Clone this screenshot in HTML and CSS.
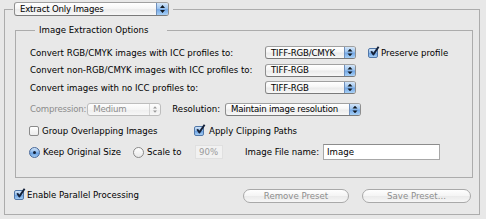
FILE: index.html
```html
<!DOCTYPE html>
<html>
<head>
<meta charset="utf-8">
<link rel="stylesheet" href="styles.css">
</head>
<body>
<div class="window">
  <fieldset class="outer">
    <legend class="outer-legend">
      <div class="popup popup-main">
        <span class="popup-label">Extract Only Images</span>
        <span class="popup-arrows"><svg width="11" height="12" viewBox="0 0 11 12"><path d="M3 5 L8 5 L5.5 2 Z M3 7 L8 7 L5.5 10 Z" fill="#101820"/></svg></span>
      </div>
    </legend>

    <fieldset class="inner">
      <legend class="inner-legend">Image Extraction Options</legend>

      <div class="convert-grid">
        <span class="label">Convert RGB/CMYK images with ICC profiles to:</span>
        <div class="popup popup-tiff">
          <span class="popup-label">TIFF-RGB/CMYK</span>
          <span class="popup-arrows"><svg width="10" height="11" viewBox="0 0 10 11"><path d="M2.5 4.6 L7.5 4.6 L5 1.8 Z M2.5 6.4 L7.5 6.4 L5 9.2 Z" fill="#101820"/></svg></span>
        </div>
        <div class="check preserve">
          <span class="cb checked"><svg class="tick" width="11" height="11" viewBox="0 0 11 11"><path d="M2.2 5.2 L4.4 8.4 L9.6 0.8" fill="none" stroke="#14213a" stroke-width="1.9" stroke-linejoin="round"/></svg></span>
          <span>Preserve profile</span>
        </div>

        <span class="label">Convert non-RGB/CMYK images with ICC profiles to:</span>
        <div class="popup popup-tiff">
          <span class="popup-label">TIFF-RGB</span>
          <span class="popup-arrows"><svg width="10" height="11" viewBox="0 0 10 11"><path d="M2.5 4.6 L7.5 4.6 L5 1.8 Z M2.5 6.4 L7.5 6.4 L5 9.2 Z" fill="#101820"/></svg></span>
        </div>
        <span></span>

        <span class="label">Convert images with no ICC profiles to:</span>
        <div class="popup popup-tiff">
          <span class="popup-label">TIFF-RGB</span>
          <span class="popup-arrows"><svg width="10" height="11" viewBox="0 0 10 11"><path d="M2.5 4.6 L7.5 4.6 L5 1.8 Z M2.5 6.4 L7.5 6.4 L5 9.2 Z" fill="#101820"/></svg></span>
        </div>
        <span></span>
      </div>

      <div class="comp-row">
        <span class="comp-label disabled-text">Compression:</span>
        <div class="popup popup-medium disabled">
          <span class="popup-label">Medium</span>
          <span class="popup-arrows"><svg width="10" height="11" viewBox="0 0 10 11"><path d="M3 4.6 L7 4.6 L5 2.2 Z M3 6.4 L7 6.4 L5 8.8 Z" fill="#9a9a9a"/></svg></span>
        </div>
        <span class="res-label">Resolution:</span>
        <div class="popup popup-res">
          <span class="popup-label">Maintain image resolution</span>
          <span class="popup-arrows"><svg width="10" height="11" viewBox="0 0 10 11"><path d="M2.5 4.6 L7.5 4.6 L5 1.8 Z M2.5 6.4 L7.5 6.4 L5 9.2 Z" fill="#101820"/></svg></span>
        </div>
      </div>

      <div class="options-grid">
        <div class="check group-check">
          <span class="cb"></span>
          <span>Group Overlapping Images</span>
        </div>
        <div class="check clip-check">
          <span class="cb checked"><svg class="tick" width="11" height="11" viewBox="0 0 11 11"><path d="M2.2 5.2 L4.4 8.4 L9.6 0.8" fill="none" stroke="#14213a" stroke-width="1.9" stroke-linejoin="round"/></svg></span>
          <span>Apply Clipping Paths</span>
        </div>

        <div class="check">
          <span class="rb selected"><span class="dot"></span></span>
          <span>Keep Original Size</span>
        </div>
        <div class="check">
          <span class="rb"></span>
          <span>Scale to</span>
        </div>
        <div class="size-right">
          <span class="field field-scale">90%</span>
          <span class="file-label">Image File name:</span>
          <span class="field field-name">Image</span>
        </div>
      </div>
    </fieldset>

    <div class="footer">
      <div class="check">
        <span class="cb checked"><svg class="tick" width="11" height="11" viewBox="0 0 11 11"><path d="M2.2 5.2 L4.4 8.4 L9.6 0.8" fill="none" stroke="#14213a" stroke-width="1.9" stroke-linejoin="round"/></svg></span>
        <span>Enable Parallel Processing</span>
      </div>
      <div class="buttons">
        <span class="button btn-remove">Remove Preset</span>
        <span class="button btn-save">Save Preset...</span>
      </div>
    </div>
  </fieldset>
</div>
</body>
</html>
```

FILE: styles.css
```css
* {
  box-sizing: border-box;
}

html, body {
  margin: 0;
  padding: 0;
  background: #e8e8e8;
}

body {
  font-family: "DejaVu Sans", "Noto Sans", sans-serif;
  font-size: 8.6px;
  color: #000;
  width: 486px;
  height: 219px;
  overflow: hidden;
}

.window {
  padding: 2px 6px 0 4px;
}

fieldset {
  margin: 0;
  padding: 0;
  border: 1px solid #acacac;
  min-width: 0;
}

.outer {
  width: 476px;
  padding: 0 0 11px 0;
}

.outer-legend {
  margin-left: 8px;
  padding: 0 4px 0 1px;
}

/* popup buttons */
.popup {
  display: flex;
  align-items: stretch;
  flex: none;
  border: 1px solid #8e8e8e;
  border-top-color: #a0a0a0;
  border-bottom-color: #7a7a7a;
  border-radius: 3px;
  background: linear-gradient(#ffffff, #f6f6f6 45%, #ebebeb 55%, #f8f8f8);
  overflow: hidden;
  white-space: nowrap;
}

.popup-label {
  flex: 1;
  display: flex;
  align-items: center;
  padding-left: 5px;
  letter-spacing: -0.2px;
  overflow: hidden;
}

.popup-arrows {
  display: flex;
  align-items: center;
  justify-content: center;
  flex: none;
  width: 11px;
  border-left: 1px solid #6f90bd;
  background: linear-gradient(#d3e5f8, #9ec5ef 45%, #74a8e6 55%, #a7d0f6);
}

.popup-main {
  width: 155px;
  height: 14px;
}

.popup-main .popup-arrows {
  width: 12px;
}

.popup-tiff {
  width: 91px;
  height: 13px;
}

.popup-medium {
  width: 74px;
  height: 13px;
}

.popup-res {
  width: 136px;
  height: 13px;
}

.popup.disabled {
  border-color: #bdbdbd;
  color: #8c8c8c;
  background: linear-gradient(#fdfdfd, #f5f5f5 50%, #eeeeee 51%, #f7f7f7);
}

.popup.disabled .popup-arrows {
  background: transparent;
  border-left: 1px solid #d4d4d4;
}

/* inner group */
.inner {
  margin: 8px 6px 0 10px;
  padding: 8px 0 16px 14px;
}

.inner-legend {
  margin-left: 5px;
  padding: 0 19px 0 4px;
  line-height: 12px;
}

.convert-grid {
  display: grid;
  grid-template-columns: 235px 91px auto;
  grid-template-rows: 17px 18px 17px;
  align-items: center;
  white-space: nowrap;
}

.preserve {
  margin-left: 12px;
}

.comp-row {
  display: flex;
  align-items: center;
  height: 18px;
  margin-top: 4px;
  white-space: nowrap;
}

.comp-label {
  letter-spacing: -0.2px;
  margin-right: 1px;
}

.disabled-text {
  color: #8c8c8c;
}

.res-label {
  margin-left: 11px;
  margin-right: 5px;
}

.options-grid {
  display: grid;
  grid-template-columns: 104px 61px auto;
  grid-template-rows: 18px 18px;
  row-gap: 3px;
  margin-top: 4px;
  margin-left: -1px;
  align-items: center;
  white-space: nowrap;
}

.group-check {
  grid-column: 1 / 3;
}

.check {
  display: flex;
  align-items: center;
  gap: 3px;
  white-space: nowrap;
}

.clip-check {
  gap: 5px;
}

/* checkbox */
.cb {
  position: relative;
  flex: none;
  width: 10px;
  height: 10px;
  border: 1px solid #8a8a8a;
  border-radius: 2px;
  background: linear-gradient(#ffffff, #ececec);
}

.cb.checked {
  border-color: #5177a8;
  background: linear-gradient(#d2e4f7, #97c0ec 45%, #6ea3e3 55%, #a5cdf4);
}

.tick {
  position: absolute;
  left: 0;
  top: -3px;
}

/* radio */
.rb {
  flex: none;
  display: flex;
  align-items: center;
  justify-content: center;
  width: 11px;
  height: 11px;
  border: 1px solid #8a8a8a;
  border-radius: 50%;
  background: linear-gradient(#ffffff, #e8e8e8);
}

.rb.selected {
  border-color: #48699a;
  background: linear-gradient(#cfe2f7, #8fbbec 45%, #659ddf 55%, #a2cbf3);
}

.dot {
  width: 3px;
  height: 3px;
  border-radius: 50%;
  background: #122036;
}

/* fields */
.size-right {
  display: flex;
  align-items: center;
}

.field {
  display: flex;
  align-items: center;
  flex: none;
  padding-left: 3px;
}

.field-scale {
  width: 28px;
  height: 14px;
  margin-left: 1px;
  color: #9a9a9a;
  background: #f1f1f1;
  border: 1px solid #e0e0e0;
}

.file-label {
  margin-left: 22px;
  margin-right: 4px;
}

.field-name {
  width: 117px;
  height: 16px;
  background: #ffffff;
  border: 1px solid #a8a8a8;
  border-top-color: #8c8c8c;
}

/* footer */
.footer {
  display: flex;
  align-items: center;
  height: 16px;
  margin-top: 9px;
  padding: 0 8px 0 9px;
}

.buttons {
  display: flex;
  margin-left: auto;
  align-self: flex-end;
}

.button {
  display: flex;
  align-items: center;
  justify-content: center;
  height: 14px;
  border: 1px solid #a9a9a9;
  border-radius: 7px;
  color: #8e8e8e;
  background: linear-gradient(#fefefe, #f4f4f4 50%, #eaeaea 51%, #f6f6f6);
}

.btn-remove {
  width: 106px;
}

.btn-save {
  width: 109px;
  margin-left: 13px;
}
```
